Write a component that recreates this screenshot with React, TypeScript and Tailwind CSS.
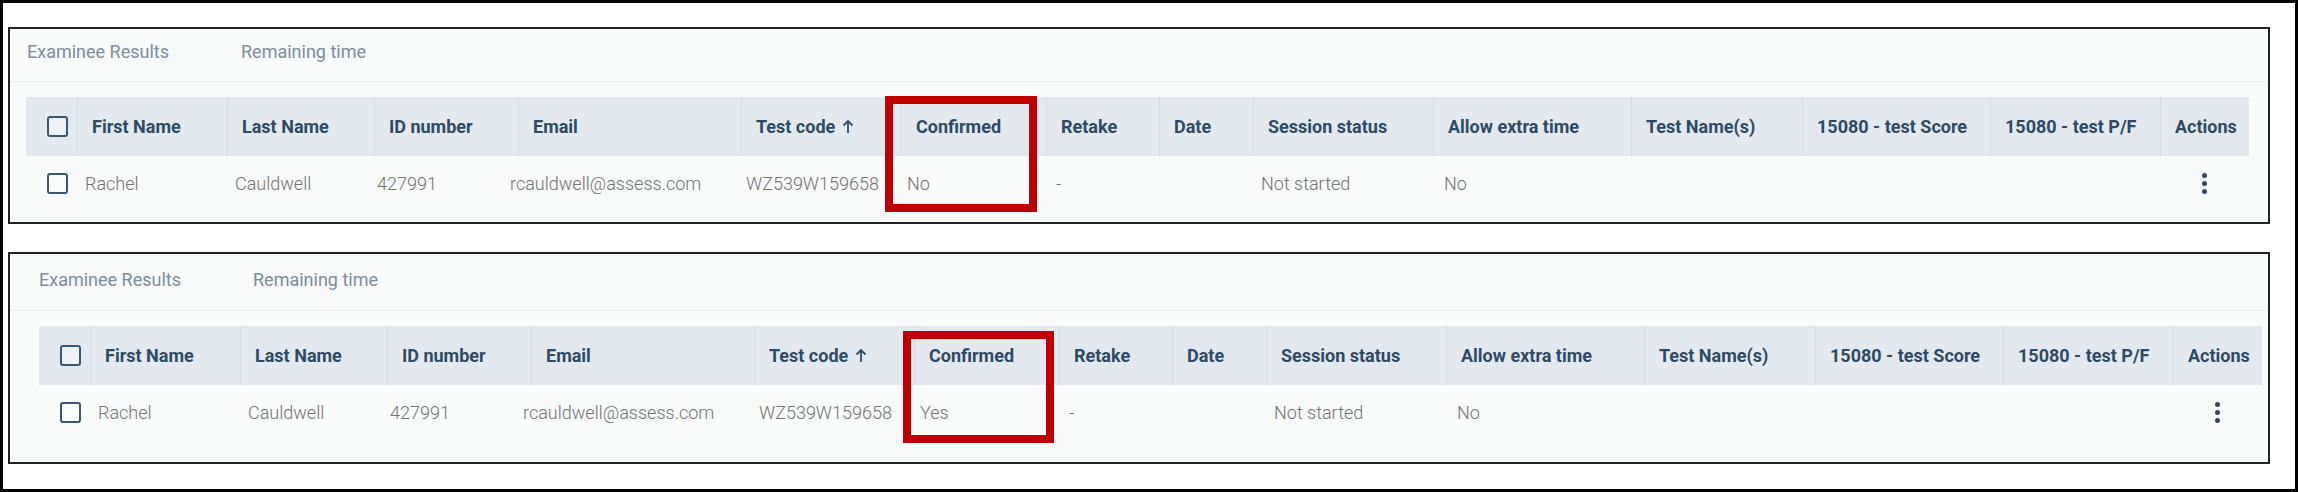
import React from "react";

interface Column {
  label: string;
  width: string;
  sort?: boolean;
}

// header columns, widths taken from the screenshot
const columns: Column[] = [
  { label: "First Name", width: "w-[150px]" },
  { label: "Last Name", width: "w-[147px]" },
  { label: "ID number", width: "w-[144px]" },
  { label: "Email", width: "w-[223px]" },
  { label: "Test code", width: "w-[160px]", sort: true },
  { label: "Confirmed", width: "w-[145px]" },
  { label: "Retake", width: "w-[113px]" },
  { label: "Date", width: "w-[94px]" },
  { label: "Session status", width: "w-[180px]" },
  { label: "Allow extra time", width: "w-[198px]" },
  { label: "Test Name(s)", width: "w-[171px]" },
  { label: "15080 - test Score", width: "w-[188px]" },
  { label: "15080 - test P/F", width: "w-[170px]" },
  { label: "Actions", width: "w-[89px]" },
];

function Checkbox() {
  return <span className="block w-[21px] h-[21px] rounded-[3px] border-2 border-[#3b566e] bg-white/40" />;
}

function Kebab() {
  return (
    <span className="flex flex-col items-center gap-[3px]">
      <span className="w-[5px] h-[5px] rounded-full bg-[#34495e]" />
      <span className="w-[5px] h-[5px] rounded-full bg-[#34495e]" />
      <span className="w-[5px] h-[5px] rounded-full bg-[#34495e]" />
    </span>
  );
}

function SortArrow() {
  return (
    <svg className="ml-[7px]" width="12" height="15" viewBox="0 0 12 15" fill="none">
      <path d="M6 14V2M1.5 6.5L6 2l4.5 4.5" stroke="#2c4b67" strokeWidth="1.8" />
    </svg>
  );
}

function ResultsTable({ confirmed }: { confirmed: string }) {
  return (
    <div className="w-[2223px]">
      <div className="flex h-[59px] bg-[#e4e9ef] text-[18px] font-bold text-[#2c4b67]">
        <div className="w-[51px] flex items-center pl-[21px]">
          <Checkbox />
        </div>
        {columns.map((col) => (
          <div
            key={col.label}
            className={`${col.width} flex items-center pl-[14px] border-l border-[#d4dae1] whitespace-nowrap`}
          >
            {col.label}
            {col.sort && <SortArrow />}
          </div>
        ))}
      </div>
      <div className="flex h-[54px] items-center text-[18px] font-light text-[#727272] whitespace-nowrap">
        <div className="w-[59px] pl-[21px]">
          <Checkbox />
        </div>
        <div className="w-[150px]">Rachel</div>
        <div className="w-[142px]">Cauldwell</div>
        <div className="w-[133px]">427991</div>
        <div className="w-[236px]">rcauldwell@assess.com</div>
        <div className="w-[161px]">WZ539W159658</div>
        <div className="w-[149px]">{confirmed}</div>
        <div className="w-[205px]">-</div>
        <div className="w-[183px]">Not started</div>
        <div className="w-[716px]">No</div>
        <div className="w-[89px] flex justify-center">
          <Kebab />
        </div>
      </div>
    </div>
  );
}

function Panel({
  confirmed,
  tabsClass,
  bodyClass,
  boxClass,
}: {
  confirmed: string;
  tabsClass: string;
  bodyClass: string;
  boxClass: string;
}) {
  return (
    <div className="relative w-[2262px] border-2 border-[#222] bg-[#f9fafa]">
      <div className={`flex gap-[72px] border-b border-[#eceef0] text-[18px] leading-[24px] text-[#7d8d9c] ${tabsClass}`}>
        <span>Examinee Results</span>
        <span>Remaining time</span>
      </div>
      <div className={bodyClass}>
        <ResultsTable confirmed={confirmed} />
      </div>
      {/* red annotation box */}
      <div className={`absolute border-[8px] border-[#c00000] ${boxClass}`} />
    </div>
  );
}

export default function App() {
  return (
    <div className="w-[2298px] h-[492px] box-border border-[3px] border-black bg-white font-[Roboto,sans-serif] overflow-hidden">
      <div className="pl-[5px] pt-[24px] flex flex-col gap-[28px]">
        <Panel
          confirmed="No"
          tabsClass="h-[53px] pt-[11px] pl-[17px]"
          bodyClass="pt-[15px] pb-[12px] pl-[16px]"
          boxClass="left-[875px] top-[67px] w-[152px] h-[116px]"
        />
        <Panel
          confirmed="Yes"
          tabsClass="h-[57px] pt-[14px] pl-[29px]"
          bodyClass="pt-[15px] pb-[23px] pl-[29px]"
          boxClass="left-[893px] top-[77px] w-[151px] h-[112px]"
        />
      </div>
    </div>
  );
}
